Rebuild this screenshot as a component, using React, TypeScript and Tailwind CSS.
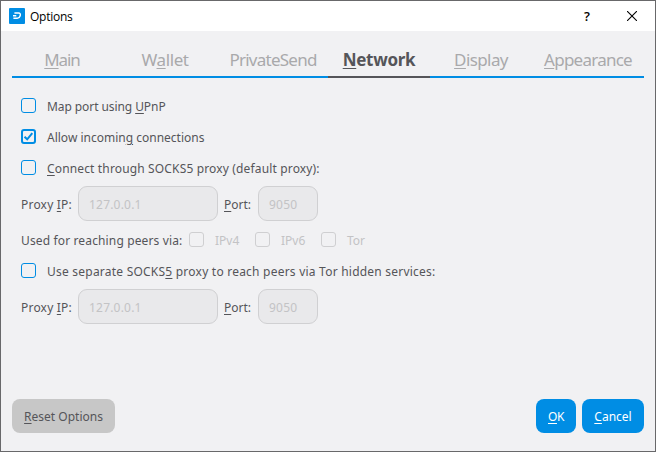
import React from 'react';

function Label({ text, className = '' }: { text: string; className?: string }) {
  const [before, rest = ''] = text.split('&');
  return (
    <span className={`whitespace-pre ${className}`}>
      {before}
      {rest && <span className="underline decoration-1 underline-offset-2">{rest[0]}</span>}
      {rest.slice(1)}
    </span>
  );
}

function Box({ checked = false, disabled = false }: { checked?: boolean; disabled?: boolean }) {
  const tone = disabled ? 'border border-[#cfcfd1]' : checked ? 'border-2 border-[#008de4]' : 'border border-[#008de4]';
  return (
    <span className={`flex size-[15px] shrink-0 items-center justify-center rounded-[3px] ${tone}`}>
      {checked && (
        <svg viewBox="0 0 11 11" className="size-[11px] shrink-0" fill="none" stroke="#008de4" strokeWidth="2">
          <path d="M1.5 5.7 4.2 8.3 9.3 2.2" />
        </svg>
      )}
    </span>
  );
}

function CheckRow({ text, checked, className = '' }: { text: string; checked?: boolean; className?: string }) {
  return (
    <div className="flex h-[15px] items-center gap-[11px]">
      <Box checked={checked} />
      <Label text={text} className={`pt-[2px] ${className}`} />
    </div>
  );
}

function ProxyFields() {
  const field = 'flex h-[35px] items-center rounded-[9px] border border-[#d0d0d2] bg-[#e9e9eb] pl-[10px] pt-px text-[#c3c3c5] tracking-[0.2px]';
  return (
    <div className="flex items-center">
      <Label text="Proxy &IP:" className="w-[57px] pt-[2px] tracking-[0.2px]" />
      <div className={`${field} w-[140px]`}>127.0.0.1</div>
      <Label text="&Port:" className="ml-[6px] w-[34px] pt-[2px]" />
      <div className={`${field} w-[60px]`}>9050</div>
    </div>
  );
}

const tabs = [
  { text: '&Main', style: 'w-[100px] tracking-[-1.1px]' },
  { text: 'W&allet', style: 'w-[106px] tracking-[-0.4px]' },
  { text: 'PrivateSend', style: 'w-[110px] tracking-[-0.75px]' },
  { text: '&Network', style: 'w-[102px] tracking-[-0.3px]', active: true },
  { text: '&Display', style: 'w-[102px] tracking-[-0.6px]' },
  { text: '&Appearance', style: 'w-[112px] tracking-[-0.75px]' },
];

export default function App() {
  return (
    <div className="flex h-[452px] w-[656px] flex-col border border-[#68686a] bg-[#f1f1f3] font-['Noto_Sans',sans-serif] text-[12px] leading-[15px] text-[#555559]">
      <header className="flex h-[30px] shrink-0 items-center bg-white pl-2 text-black">
        <svg viewBox="0 0 16 16" className="size-4">
          <rect width="16" height="16" rx="1" fill="#008de4" />
          <path d="M5.4 5h4.2c1.4 0 2 .9 1.7 2.3l-.2.7c-.4 1.4-1.3 2.2-2.8 2.2H4.4M4 7.7h3.3" fill="none" stroke="white" strokeWidth="1.4" />
        </svg>
        <span className="ml-[5px] font-['Open_Sans',sans-serif] tracking-[-0.25px]">Options</span>
        <span className="ml-auto mr-[37px] font-['Open_Sans',sans-serif] text-[13px] font-semibold">?</span>
        <svg viewBox="0 0 10 10" className="mr-[18px] size-[10px]" fill="none" stroke="black" strokeWidth="1.1">
          <path d="M0 0 10 10M10 0 0 10" />
        </svg>
      </header>
      <nav className="mx-[11px] flex h-[47px] shrink-0">
        {tabs.map((t) => (
          <div
            key={t.text}
            className={`flex items-center justify-center border-b-2 pt-[13px] text-[17px] leading-[20px] ${t.style} ${t.active ? 'border-[#555559] font-bold' : 'border-[#008de4] text-[#a9a9ab]'}`}
          >
            <Label text={t.text} />
          </div>
        ))}
      </nav>
      <main className="flex flex-1 flex-col pl-5 pt-5">
        <div className="flex flex-col gap-4">
          <CheckRow text="Map port using &UPnP" className="tracking-[-0.08px]" />
          <CheckRow text="Allow incomin&g connections" checked />
          <CheckRow text="&Connect through SOCKS5 proxy (default proxy):" className="tracking-[0.15px]" />
        </div>
        <div className="mt-[11px]">
          <ProxyFields />
        </div>
        <div className="mt-[11px] flex h-[15px] items-center text-[#c3c3c5]">
          <Label text="Used for reaching peers via:" className="w-[168px] pt-[2px] tracking-[0.14px] text-[#555559]" />
          {['IPv4', 'IPv6', 'Tor'].map((name) => (
            <div key={name} className="flex w-[66px] items-center gap-[11px]">
              <Box disabled />
              <Label text={name} className="pt-[2px]" />
            </div>
          ))}
        </div>
        <div className="mt-4">
          <CheckRow text="Use separate SOCKS&5 proxy to reach peers via Tor hidden services:" className="tracking-[0.225px]" />
        </div>
        <div className="mt-[11px]">
          <ProxyFields />
        </div>
      </main>
      <footer className="mx-[11px] mb-[18px] flex h-[34px] shrink-0 gap-[6px]">
        <button className="mr-auto w-[103px] rounded-[8px] bg-[#c7c7c7]"><Label text="&Reset Options" /></button>
        <button className="w-[40px] rounded-[8px] bg-[#008de4] text-white"><Label text="&OK" className="tracking-[-0.4px]" /></button>
        <button className="w-[62px] rounded-[8px] bg-[#008de4] text-white"><Label text="&Cancel" /></button>
      </footer>
    </div>
  );
}
